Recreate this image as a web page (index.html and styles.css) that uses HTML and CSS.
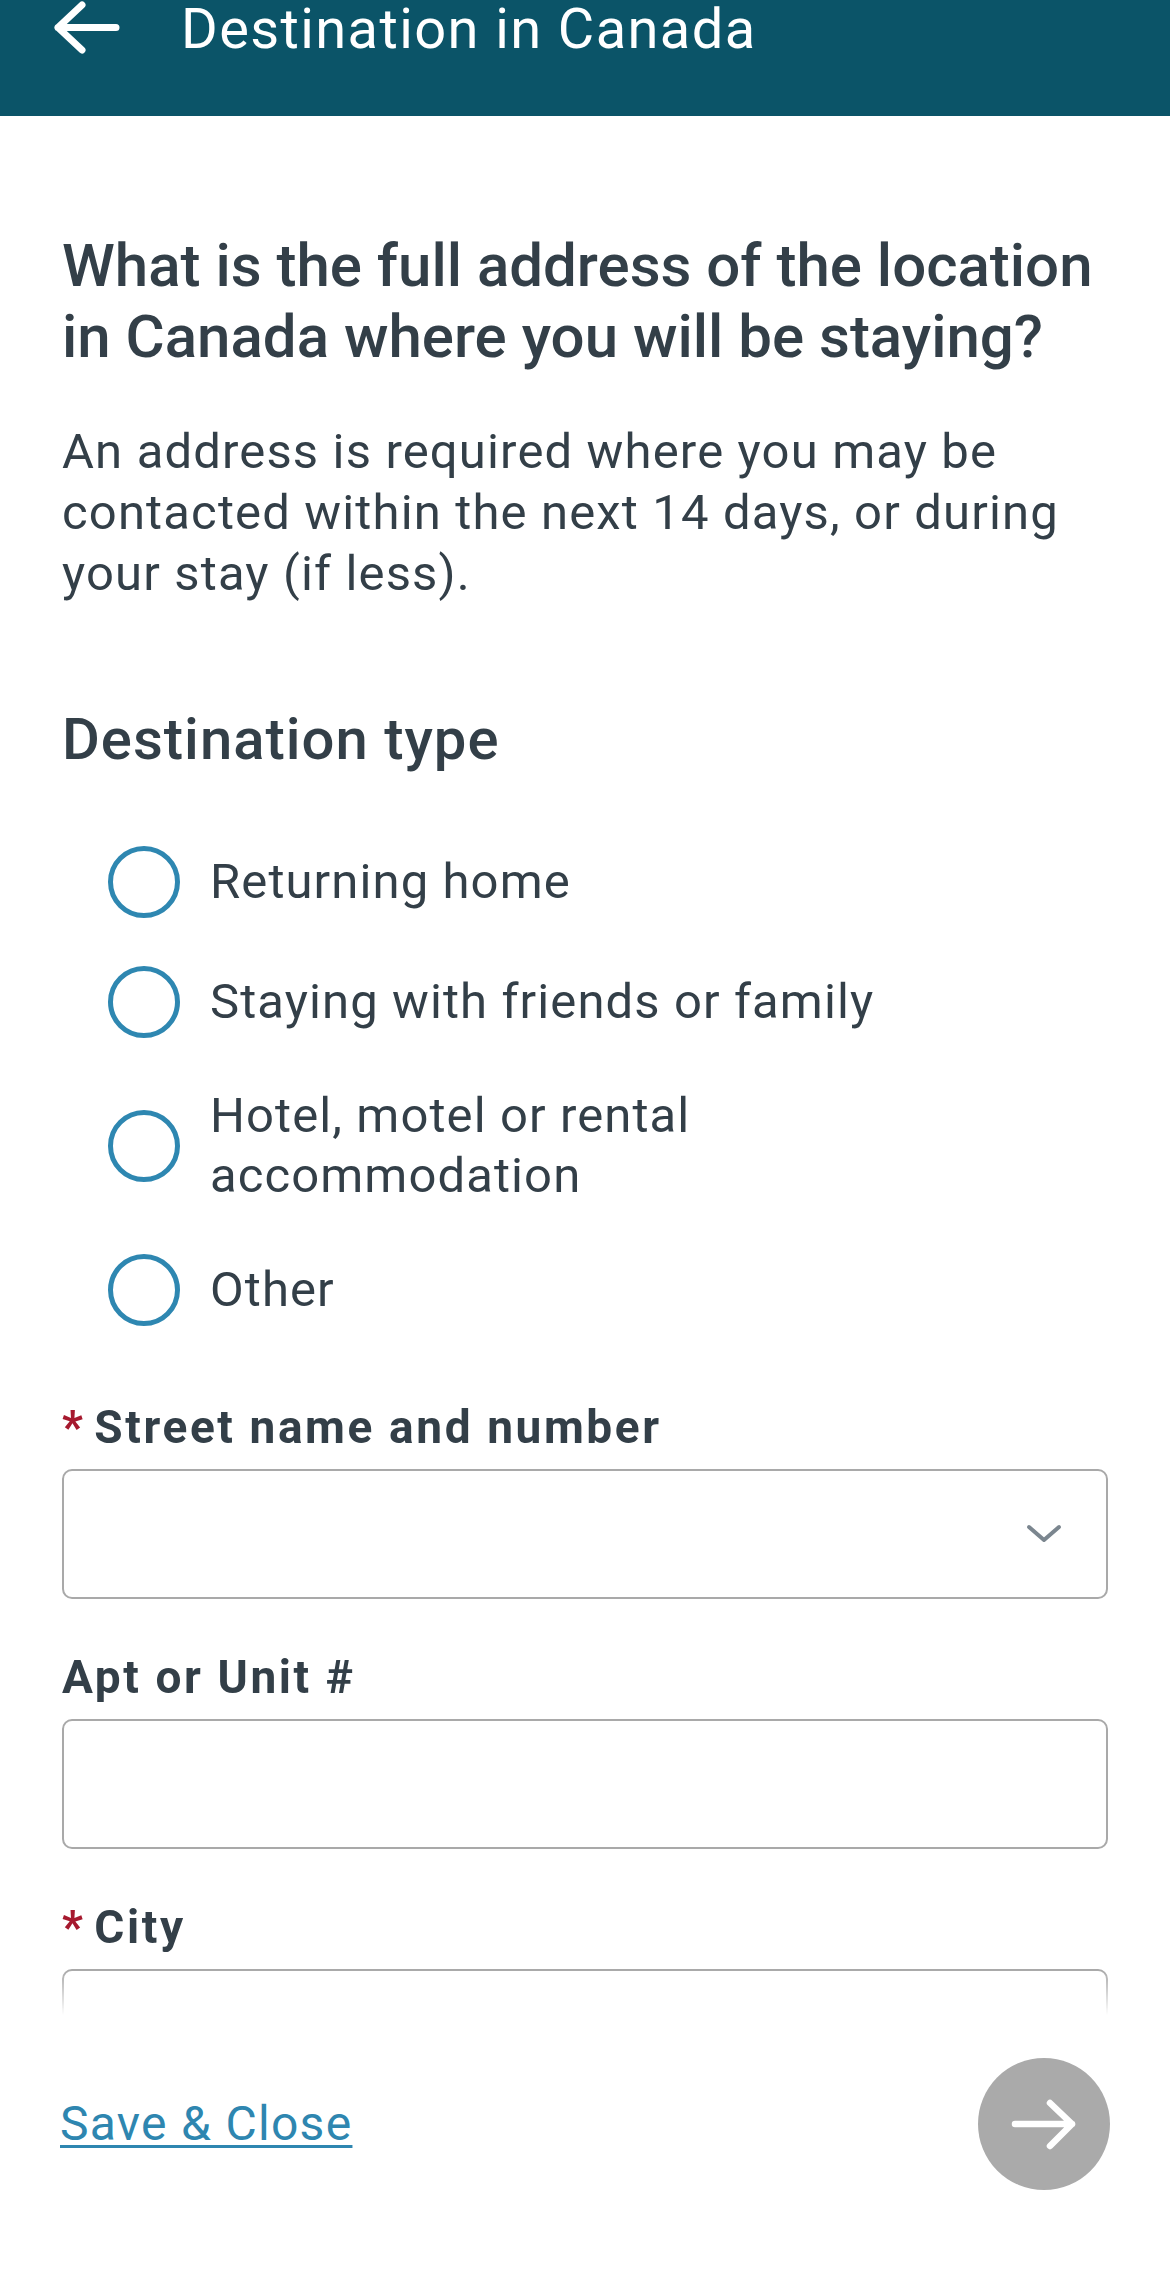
FILE: index.html
```html
<!DOCTYPE html>
<html lang="en">
<head>
<meta charset="utf-8">
<title>Destination in Canada</title>
<link rel="stylesheet" href="styles.css">
</head>
<body>
<div class="app">
  <header class="topbar">
    <div class="topbar-row">
      <svg class="back" width="66" height="56" viewBox="0 0 66 56" aria-hidden="true">
        <path d="M4 27.5 H62 M28 5 L4 27.5 L28 50" fill="none" stroke="#fff" stroke-width="7" stroke-linecap="round" stroke-linejoin="round"/>
      </svg>
      <h1 class="title">Destination in Canada</h1>
    </div>
  </header>

  <main class="scroll">
    <h2 class="question">What is the full address of the location in Canada where you will be staying?</h2>
    <p class="hint">An address is required where you may be contacted within the next 14 days, or during your stay (if less).</p>

    <h3 class="group-title">Destination type</h3>
    <ul class="radios">
      <li class="radio"><span class="dot"></span><span class="radio-label">Returning home</span></li>
      <li class="radio"><span class="dot"></span><span class="radio-label">Staying with friends or family</span></li>
      <li class="radio"><span class="dot"></span><span class="radio-label">Hotel, motel or rental<br>accommodation</span></li>
      <li class="radio"><span class="dot"></span><span class="radio-label">Other</span></li>
    </ul>

    <div class="field">
      <label class="field-label"><span class="req">* </span>Street name and number</label>
      <div class="box box-select">
        <svg class="chev" width="36" height="20" viewBox="0 0 36 20" aria-hidden="true">
          <path d="M3 3 L18 16 L33 3" fill="none" stroke="#7b868f" stroke-width="4" stroke-linecap="round" stroke-linejoin="round"/>
        </svg>
      </div>
    </div>

    <div class="field">
      <label class="field-label">Apt or Unit #</label>
      <div class="box"></div>
    </div>

    <div class="field">
      <label class="field-label"><span class="req">* </span>City</label>
      <div class="box"></div>
    </div>
  </main>

  <footer class="footer">
    <a class="save" href="#">Save &amp; Close</a>
    <button class="next" type="button" aria-label="Next">
      <svg width="132" height="132" viewBox="0 0 132 132" aria-hidden="true">
        <path d="M37 66 H94 M72 45 L94 66 L72 88" fill="none" stroke="#fff" stroke-width="6.5" stroke-linecap="round" stroke-linejoin="round"/>
      </svg>
    </button>
  </footer>
</div>
</body>
</html>
```

FILE: styles.css
```css
* { box-sizing: border-box; }

html, body {
  margin: 0;
  padding: 0;
  background: #fff;
}

body {
  font-family: Roboto, "Liberation Sans", sans-serif;
  color: #333f48;
}

.app {
  width: 1170px;
  height: 2280px;
  display: flex;
  flex-direction: column;
  overflow: hidden;
}

/* Header */
.topbar {
  height: 116px;
  flex: 0 0 116px;
  background: #0b5468;
}

.topbar-row {
  height: 58px;
  display: flex;
  align-items: center;
  padding-left: 54px;
}

.back {
  display: block;
  flex: 0 0 auto;
  margin-top: -2px;
}

.title {
  margin: 0 0 0 61px;
  font-size: 56px;
  font-weight: 400;
  line-height: 58px;
  letter-spacing: 1.4px;
  color: #fff;
  white-space: nowrap;
}

/* Scroll area */
.scroll {
  flex: 1 1 auto;
  overflow: hidden;
  padding: 114px 62px 0;
  -webkit-mask-image: linear-gradient(to bottom, #000 calc(100% - 45px), transparent 100%);
  mask-image: linear-gradient(to bottom, #000 calc(100% - 45px), transparent 100%);
}

.question {
  margin: 0;
  font-size: 60px;
  line-height: 71px;
  font-weight: 500;
}

.hint {
  margin: 49px 0 0;
  font-size: 49px;
  line-height: 61px;
  font-weight: 400;
  letter-spacing: 1.15px;
}

.group-title {
  margin: 101px 0 0;
  font-size: 58px;
  line-height: 68px;
  font-weight: 500;
  letter-spacing: 1px;
}

.radios {
  list-style: none;
  margin: 73px 0 0;
  padding: 0 0 0 46px;
  display: flex;
  flex-direction: column;
  gap: 48px;
}

.radio {
  display: flex;
  align-items: center;
  gap: 30px;
}

.dot {
  flex: 0 0 72px;
  width: 72px;
  height: 72px;
  border: 5px solid #2e87b1;
  border-radius: 50%;
}

.radio-label {
  font-size: 49px;
  line-height: 60px;
  letter-spacing: 1.1px;
}

/* Fields */
.field {
  margin-top: 75px;
  display: flex;
  flex-direction: column;
  gap: 15px;
}

.field + .field {
  margin-top: 52px;
}

.field-label {
  font-size: 46px;
  line-height: 53px;
  font-weight: 700;
  letter-spacing: 2.6px;
}

.req {
  color: #a6192e;
  letter-spacing: 0;
}

.box {
  height: 130px;
  flex: 0 0 130px;
  border: 2px solid #a9a9a9;
  border-radius: 10px;
  background: #fff;
}

.box-select {
  display: flex;
  align-items: center;
  justify-content: flex-end;
  padding-right: 44px;
}

.chev {
  display: block;
}

/* Footer */
.footer {
  flex: 0 0 265px;
  height: 265px;
  padding: 43px 60px 0 60px;
  display: flex;
  align-items: flex-start;
  justify-content: space-between;
}

.save {
  margin-top: 38px;
  font-size: 48px;
  line-height: 56px;
  letter-spacing: 1.3px;
  color: #2e86b0;
  text-decoration: underline;
  text-decoration-thickness: 3px;
  text-underline-offset: 5px;
}

.next {
  width: 132px;
  height: 132px;
  margin: 0;
  padding: 0;
  border: 0;
  border-radius: 50%;
  background: #aaaaaa;
  display: flex;
  align-items: center;
  justify-content: center;
}

.next svg {
  display: block;
}
```
